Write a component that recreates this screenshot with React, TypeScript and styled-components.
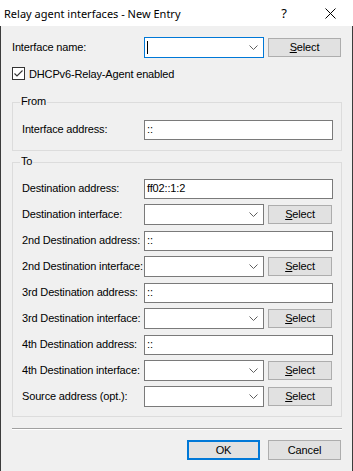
import React from "react";
import styled, { createGlobalStyle } from "styled-components";

const GlobalStyle = createGlobalStyle`
  html, body { margin: 0; padding: 0; background: #f0f0f0; }
  body {
    font-family: "Liberation Sans", Arial, sans-serif;
    font-size: 11px;
    letter-spacing: -0.15px;
    color: #000;
  }
  * { box-sizing: border-box; }
`;

const Window = styled.div`
  width: 353px;
  height: 471px;
  display: flex;
  flex-direction: column;
  background: #f0f0f0;
`;

const TitleBar = styled.div`
  height: 26px;
  flex: none;
  background: #fff;
  display: flex;
  align-items: center;
  padding-left: 4px;
`;

const TitleText = styled.div`
  flex: 1;
  font-family: "Noto Sans", "Liberation Sans", sans-serif;
  font-size: 11px;
  letter-spacing: 0;
  color: #000;
  white-space: nowrap;
`;

const CaptionButton = styled.div`
  width: 46px;
  height: 26px;
  display: flex;
  align-items: center;
  justify-content: center;
  font-family: "Noto Sans", "Liberation Sans", sans-serif;
  font-size: 13px;
  letter-spacing: 0;
  color: #000;
`;

const Body = styled.div`
  flex: 1;
  display: flex;
  flex-direction: column;
  border: 1px solid #3c3c3c;
  border-top: none;
  padding: 11px 10px 11px 11px;
`;

const Row = styled.div`
  height: 21px;
  display: flex;
  align-items: center;
  flex: none;
`;

const Label = styled.div<{ $w: number }>`
  position: relative;
  z-index: 1;
  width: ${(p) => p.$w}px;
  flex: none;
  white-space: nowrap;
  overflow: visible;
  line-height: 13px;
`;

const TextField = styled.div<{ $w: number }>`
  width: ${(p) => p.$w}px;
  height: 20px;
  flex: none;
  background: #fff;
  border: 1px solid #7a7a7a;
  display: flex;
  align-items: center;
  padding-left: 2px;
  line-height: 13px;
`;

const Combo = styled.div<{ $focused?: boolean }>`
  width: 120px;
  height: 21px;
  flex: none;
  background: #fff;
  border: 1px solid ${(p) => (p.$focused ? "#0078d7" : "#7a7a7a")};
  display: flex;
  align-items: center;
  padding-left: 2px;
  padding-right: 5px;
`;

const ComboValue = styled.div`
  flex: 1;
  display: flex;
  align-items: center;
`;

const Caret = styled.span`
  display: block;
  width: 1px;
  height: 13px;
  background: #000;
`;

const Button = styled.div<{ $w: number; $h?: number; $default?: boolean }>`
  width: ${(p) => p.$w}px;
  height: ${(p) => p.$h ?? 19}px;
  flex: none;
  background: #e1e1e1;
  border: ${(p) => (p.$default ? "2px solid #0078d7" : "1px solid #adadad")};
  display: flex;
  align-items: center;
  justify-content: center;
  line-height: 13px;
  color: #000;
`;

const Accel = styled.span`
  text-decoration: underline;
  text-underline-offset: 1px;
`;

const CheckRow = styled.div`
  display: flex;
  align-items: center;
  height: 13px;
  margin-top: 9px;
  gap: 4px;
  flex: none;
`;

const CheckBox = styled.div`
  width: 13px;
  height: 13px;
  background: #fff;
  border: 1px solid #333;
  display: flex;
  align-items: center;
  justify-content: center;
`;

const Group = styled.div<{ $top: number; $pt: number; $pb: number }>`
  position: relative;
  margin-top: ${(p) => p.$top}px;
  width: 330px;
  border: 1px solid #dcdcdc;
  padding: ${(p) => p.$pt}px 8px ${(p) => p.$pb}px 9px;
  display: flex;
  flex-direction: column;
  gap: 5px;
  flex: none;
`;

const Legend = styled.div`
  position: absolute;
  left: 7px;
  top: -8px;
  padding: 0 1px;
  background: #f0f0f0;
  line-height: 13px;
`;

const Gap = styled.div`
  width: 4px;
  flex: none;
`;

const Separator = styled.div`
  margin-top: 11px;
  width: 330px;
  height: 2px;
  border-top: 1px solid #a0a0a0;
  border-bottom: 1px solid #fff;
  flex: none;
`;

const ButtonRow = styled.div`
  margin-top: 10px;
  display: flex;
  justify-content: flex-end;
  gap: 8px;
  padding-right: 1px;
  flex: none;
`;

const Chevron = () => (
  <svg width="9" height="5" viewBox="0 0 9 5">
    <path d="M0.5 0.5 L4.5 4.5 L8.5 0.5" fill="none" stroke="#606060" strokeWidth="1" />
  </svg>
);

const CloseIcon = () => (
  <svg width="11" height="11" viewBox="0 0 11 11">
    <path d="M0.5 0.5 L10.5 10.5 M10.5 0.5 L0.5 10.5" fill="none" stroke="#000" strokeWidth="1" />
  </svg>
);

const CheckMark = () => (
  <svg width="11" height="11" viewBox="0 0 11 11">
    <path d="M1.5 5.5 L4 8 L9.5 2.5" fill="none" stroke="#333" strokeWidth="1.1" />
  </svg>
);

const SelectButton = ({ w }: { w: number }) => (
  <Button $w={w}>
    <span>
      <Accel>S</Accel>elect
    </span>
  </Button>
);

const ComboRow = ({ label, focused, wide }: { label: string; focused?: boolean; wide?: boolean }) => (
  <Row>
    <Label $w={wide ? 132 : 122}>{label}</Label>
    <Combo $focused={focused}>
      <ComboValue>{focused && <Caret />}</ComboValue>
      <Chevron />
    </Combo>
    <Gap />
    <SelectButton w={wide ? 73 : 64} />
  </Row>
);

const AddrRow = ({ label, value }: { label: string; value: string }) => (
  <Row>
    <Label $w={122}>{label}</Label>
    <TextField $w={189}>{value}</TextField>
  </Row>
);

export default function App() {
  return (
    <>
      <GlobalStyle />
      <Window>
        <TitleBar>
          <TitleText>Relay agent interfaces - New Entry</TitleText>
          <CaptionButton>?</CaptionButton>
          <CaptionButton>
            <CloseIcon />
          </CaptionButton>
        </TitleBar>
        <Body>
          <ComboRow label="Interface name:" focused wide />
          <CheckRow>
            <CheckBox>
              <CheckMark />
            </CheckBox>
            <span>DHCPv6-Relay-Agent enabled</span>
          </CheckRow>
          <Group $top={22} $pt={16} $pb={10}>
            <Legend>From</Legend>
            <AddrRow label="Interface address:" value="::" />
          </Group>
          <Group $top={11} $pt={15} $pb={9}>
            <Legend>To</Legend>
            <AddrRow label="Destination address:" value="ff02::1:2" />
            <ComboRow label="Destination interface:" />
            <AddrRow label="2nd Destination address:" value="::" />
            <ComboRow label="2nd Destination interface:" />
            <AddrRow label="3rd Destination address:" value="::" />
            <ComboRow label="3rd Destination interface:" />
            <AddrRow label="4th Destination address:" value="::" />
            <ComboRow label="4th Destination interface:" />
            <ComboRow label="Source address (opt.):" />
          </Group>
          <Separator />
          <ButtonRow>
            <Button $w={73} $h={20} $default>
              OK
            </Button>
            <Button $w={73} $h={20}>
              Cancel
            </Button>
          </ButtonRow>
        </Body>
      </Window>
    </>
  );
}
